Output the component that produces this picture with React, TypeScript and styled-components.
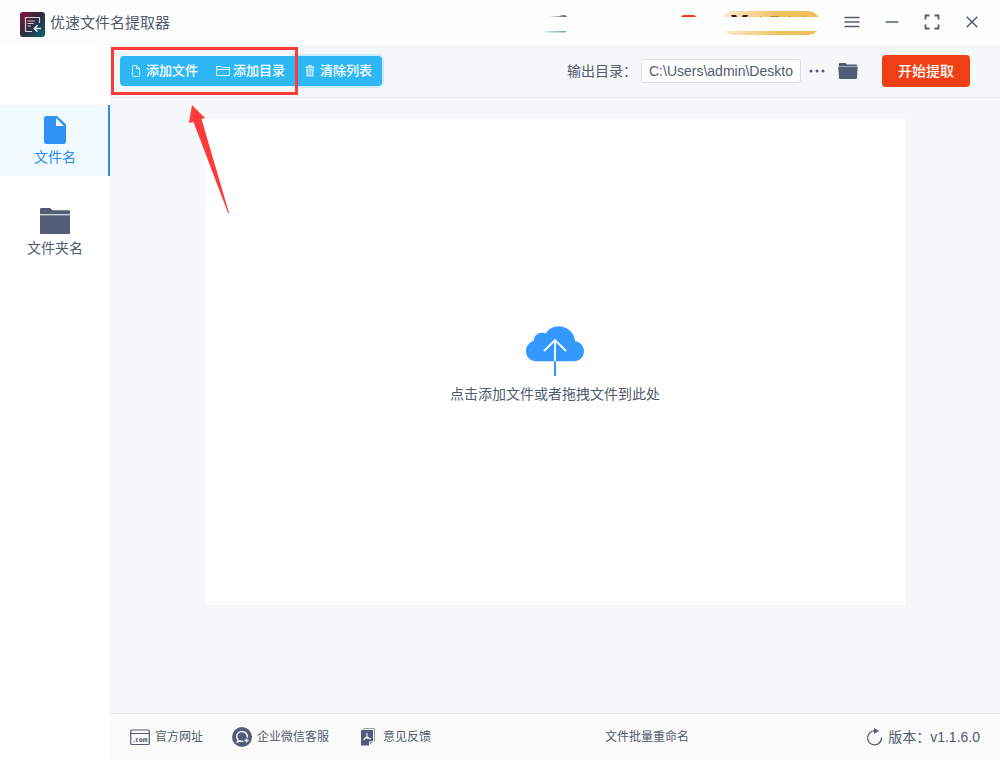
import React from "react";
import styled, { createGlobalStyle } from "styled-components";

const ink = "#515a6e";
const iconInk = "#525c76";
const blue = "#2d8cf0";
const red = "#ff3a3a";

const GlobalStyle = createGlobalStyle`
  *, *::before, *::after { box-sizing: border-box; }
  body {
    margin: 0;
    background: #f5f7f9;
    color: ${ink};
    font: 14px/20px "Liberation Sans", "Noto Sans CJK SC", sans-serif;
  }
  button, input { font: inherit; color: inherit; margin: 0; }
  button { border: 0; padding: 0; background: none; cursor: pointer; }
  a { color: inherit; text-decoration: none; }
  svg { display: block; flex: none; }
`;

const Window = styled.div`
  position: relative;
  display: flex;
  flex-direction: column;
  min-height: 100vh;
`;

const TitleBar = styled.header`
  display: flex;
  align-items: center;
  height: 45px;
  padding: 0 8px 0 20px;
  background: #fdfdfd;
`;

const Brand = styled.div`
  display: flex;
  align-items: center;
  gap: 5px;
  padding-top: 4px;
`;

const AppName = styled.h1`
  margin: 0 0 4px;
  font-size: 15px;
  font-weight: 400;
  line-height: 20px;
`;

const Account = styled.div`
  position: relative;
  display: flex;
  align-items: center;
  height: 24px;
  margin: 0 12px 0 auto;
`;

const AccountMask = styled.div`
  position: absolute;
  left: 0;
  right: 0;
  top: 6px;
  height: 14px;
  background: #fefefe;
`;

const Avatar = styled.div`
  margin-right: 114px;
`;

const HotBadge = styled.div`
  width: 15px;
  height: 16px;
  margin-right: 26px;
  border-radius: 3px;
  background: #f03e12;
`;

const VipPill = styled.div`
  width: 98px;
  height: 24px;
  border-radius: 12px;
  background: linear-gradient(90deg, #fbebcf, #f0c060 60%, #efbe5c);
`;

const WindowControls = styled.div`
  display: flex;
  height: 45px;
`;

const WindowButton = styled.button`
  display: grid;
  place-items: center;
  width: 40px;
  height: 43px;
`;

const Body = styled.div`
  display: flex;
  flex: 1;
`;

const Sidebar = styled.nav`
  display: flex;
  flex-direction: column;
  gap: 20px;
  flex: none;
  width: 110px;
  padding-top: 60px;
  background: #fff;
`;

const SideItem = styled.button<{ $active?: boolean }>`
  display: flex;
  flex-direction: column;
  align-items: center;
  gap: 3px;
  height: 71px;
  padding-top: 11px;
  color: ${(p) => (p.$active ? blue : ink)};
  background: ${(p) => (p.$active ? "#f0faff" : "transparent")};
  box-shadow: ${(p) => (p.$active ? `inset -2px 0 ${blue}` : "none")};
`;

const Main = styled.main`
  display: flex;
  flex: 1;
  flex-direction: column;
  min-width: 0;
`;

const Toolbar = styled.div`
  display: flex;
  align-items: center;
  height: 53px;
  padding: 0 30px 0 10px;
  border-bottom: 1px solid #e8eaec;
`;

const ButtonGroup = styled.div`
  display: flex;
`;

const ActionButton = styled.button<{ $focused?: boolean }>`
  display: flex;
  align-items: center;
  gap: 3px;
  height: 30px;
  padding: 0 9px;
  color: #fff;
  background: #2db7f5;
  font-size: 13px;
  font-weight: 500;
  white-space: nowrap;
  box-shadow: ${(p) => (p.$focused ? "0 0 0 2px rgba(45, 183, 245, 0.2)" : "none")};
  &:first-child { border-radius: 4px 0 0 4px; }
  &:last-child { border-radius: 0 4px 4px 0; padding-right: 10px; }
`;

const OutputField = styled.div`
  display: flex;
  align-items: center;
  margin-left: auto;
`;

const OutputLabel = styled.label`
  margin-right: 4px;
  white-space: nowrap;
`;

const PathInput = styled.input`
  width: 160px;
  height: 24px;
  padding: 0 7px;
  border: 1px solid #dcdee2;
  border-radius: 3px;
  background: #fff;
  outline: none;
`;

const IconButton = styled.button`
  display: grid;
  place-items: center;
  width: 31px;
  height: 24px;
`;

const StartButton = styled.button`
  width: 88px;
  height: 32px;
  margin-left: 19px;
  border-radius: 4px;
  background: #ef3f15;
  color: #fff;
  font-weight: 500;
`;

const Workspace = styled.section`
  display: flex;
  flex: 1;
  padding: 20px 95px 108px;
`;

const DropZone = styled.button`
  display: flex;
  flex: 1;
  flex-direction: column;
  align-items: center;
  justify-content: center;
  gap: 8px;
  padding-top: 7px;
  background: #fff;
`;

const Footer = styled.footer`
  display: flex;
  align-items: center;
  gap: 29px;
  height: 47px;
  padding: 0 20px;
  border-top: 1px solid #e8eaec;
  background: #fafafa;
  font-size: 12px;
  white-space: nowrap;
`;

const FooterLink = styled.a`
  display: flex;
  align-items: center;
  gap: 5px;
`;

const RenameLink = styled.a`
  margin-left: 145px;
`;

const Version = styled.div`
  display: flex;
  align-items: center;
  gap: 5px;
  margin-left: auto;
  font-size: 14px;
`;

const Highlight = styled.div`
  position: absolute;
  left: 111px;
  top: 47px;
  width: 187px;
  height: 48px;
  border: 3px solid ${red};
  pointer-events: none;
`;

const Arrow = styled.svg`
  position: absolute;
  left: 188px;
  top: 104px;
  pointer-events: none;
`;

const LogoIcon = () => (
  <svg width="25" height="25" viewBox="0 0 25 25" fill="none">
    <defs>
      <linearGradient id="logo" x1="0" y1="0" x2="1" y2="1">
        <stop offset="0" stopColor="#8a0f35" />
        <stop offset="0.45" stopColor="#33283f" />
        <stop offset="1" stopColor="#08636f" />
      </linearGradient>
    </defs>
    <rect width="25" height="25" rx="3" fill="url(#logo)" />
    <path d="M12 19.500H5.500V5.500H19.500V11" stroke="#d8ced8" strokeWidth="1.200" />
    <path d="M7.500 9H15M7.500 11.500H13.500M7.500 14H11" stroke="#d8ced8" strokeWidth="1.200" />
    <path d="M21 16.500H14.500M17.500 13.300L14.300 16.500L17.500 19.700" stroke="#e8f0f2" strokeWidth="1.500" />
  </svg>
);

const AvatarTrace = () => (
  <svg width="22" height="24" viewBox="0 0 22 24">
    <defs>
      <linearGradient id="av" x1="0" x2="1">
        <stop offset="0" stopColor="#fff" />
        <stop offset="1" stopColor="#42586a" />
      </linearGradient>
      <linearGradient id="av2" x1="0" x2="1">
        <stop offset="0" stopColor="#d5e8ea" />
        <stop offset="1" stopColor="#6e9a9f" />
      </linearGradient>
    </defs>
    <path d="M4 6V5H14Q17 3.600 20 4L22 6Z" fill="url(#av)" />
    <path d="M0 20H22L20 21.500H0Z" fill="url(#av2)" />
  </svg>
);

const VipTrace = () => (
  <svg width="98" height="24" viewBox="0 0 98 24">
    <path d="M9 4H14L15 6H10ZM21 4H26L25 6H20Z" fill="#4c1010" />
    <path d="M38 5H39V6H38ZM48 5H57V6H48ZM67 5H68V6H67ZM81 5H82V6H81Z" fill="#b98a45" />
  </svg>
);

const FileOutline = () => (
  <svg width="14" height="14" viewBox="0 0 14 14" fill="none" stroke="#fff" strokeOpacity="0.85">
    <path d="M3.500 2.500Q3.500 1.500 4.500 1.500H7.500L10.500 4.500V11.500Q10.500 12.500 9.500 12.500H4.500Q3.500 12.500 3.500 11.500ZM7.500 1.500V4.500H10.500" />
  </svg>
);

const FolderOutline = () => (
  <svg width="14" height="14" viewBox="0 0 14 14" fill="none" stroke="#fff" strokeOpacity="0.85">
    <path d="M0.500 11.500V2.500H5L6 3.500H13.500V11.500ZM0.500 5.500H13.500" />
  </svg>
);

const TrashIcon = () => (
  <svg width="14" height="14" viewBox="0 0 14 14" fill="#fff" fillOpacity="0.65">
    <path d="M5 1H9V2.200H11.500V4H2.500V2.200H5Z" />
    <path fillRule="evenodd" d="M3 4.500H11L10.500 12.500H3.500ZM5 6V11H5.500V6ZM6.800 6V11H7.300V6ZM8.500 6V11H9V6Z" />
  </svg>
);

const FileIcon = () => (
  <svg width="22" height="28" viewBox="0 0 22 28">
    <path d="M2.500 0H13L22 8.500V25.500Q22 28 19.500 28H2.500Q0 28 0 25.500V2.500Q0 0 2.500 0Z" fill="#3192f5" />
    <path d="M12 2L20 10H12Z" fill="#f0faff" />
  </svg>
);

const SideFolder = () => (
  <svg width="30" height="28" viewBox="0 0 30 28" fill={iconInk}>
    <path d="M0 2Q0 1 1 1H10L12.500 3.300H29Q30 3.300 30 4.300V7.300H0Z" />
    <path d="M0 8.300H30V26Q30 27 29 27H1Q0 27 0 26Z" />
  </svg>
);

const FolderSolid = () => (
  <svg width="20" height="18" viewBox="0 0 20 18" fill={iconInk}>
    <path d="M1 4V2Q1 1 2 1H7.500L9 2.500H18Q19 2.500 19 3.500V4Z" />
    <path d="M0.300 4.600H19.700L19 16Q19 17 18 17H2Q1 17 1 16Z" />
  </svg>
);

const CloudIcon = () => (
  <svg width="58" height="50" viewBox="0 0 58 50" fill="none">
    <path
      d="M10 35.300C4.500 35.300 0 31 0 25C0 20 3.500 16 7.800 14.800C8 10 11.500 6.800 16 6.800Q18 6.800 19.800 7.500C22.500 3.200 27 0.300 32.500 0.300C41.500 0.300 48.500 7 49 15C54 16 58 20 58 25C58 31 53.500 35.300 48 35.300Z"
      fill="#3398ff"
    />
    <path d="M29 35V50" stroke="#3398ff" strokeWidth="2" />
    <path d="M29 35.300V14.500M18 25L29 14L40 25" stroke="#fff" strokeWidth="1.900" />
  </svg>
);

const SiteIcon = () => (
  <svg width="20" height="17" viewBox="0 0 20 17" fill="none" stroke={iconInk}>
    <rect x="0.700" y="1" width="18.600" height="14.500" rx="1" strokeWidth="1.200" />
    <path d="M1 4.500H19" />
    <path d="M3.700 12.500H4.700M8 9.800H6.300V12.400H8M9.800 9.800H11.800V12.400H9.800ZM13.400 13V9.800H16.800V13M15.100 9.800V13" />
  </svg>
);

const ChatIcon = () => (
  <svg width="20" height="20" viewBox="0 0 20 20" fill="none">
    <circle cx="10" cy="10" r="10" fill={iconInk} />
    <path
      d="M11.500 14.200Q9.500 14.700 7.700 14L5.500 15L6 12.800A5.300 5 0 1 1 15.200 10.500"
      stroke="#fafafa"
      strokeWidth="1.400"
    />
    <path d="M14.600 11.500V15.500M12.600 13.500H16.600" stroke="#fafafa" strokeWidth="1.300" />
  </svg>
);

const FeedbackIcon = () => (
  <svg width="20" height="18" viewBox="0 0 20 18" fill="none">
    <path d="M5 1.500L6 0.600H16.500V13.500" stroke={iconInk} strokeOpacity="0.6" />
    <path d="M3 2H15V13.500L11 17.500H3Z" fill={iconInk} />
    <path d="M11.500 17V13.800H15" stroke="#fafafa" />
    <path d="M9 5V8.500L5.500 11.800M9 8.500Q10 10.300 13 11M6.500 10.500Q9 9.300 11.500 10.500" stroke="#fafafa" strokeWidth="1.100" />
  </svg>
);

const RefreshIcon = () => (
  <svg width="17" height="18" viewBox="0 0 17 18" fill="none">
    <path d="M9.500 3A7 7 0 1 0 15.500 9.500" stroke={iconInk} strokeWidth="1.300" />
    <path d="M8 0L13 3L8 6Z" fill={iconInk} />
  </svg>
);

export default function App() {
  return (
    <>
      <GlobalStyle />
      <Window>
        <TitleBar>
          <Brand>
            <LogoIcon />
            <AppName>优速文件名提取器</AppName>
          </Brand>
          <Account>
            <Avatar><AvatarTrace /></Avatar>
            <HotBadge />
            <VipPill><VipTrace /></VipPill>
            <AccountMask />
          </Account>
          <WindowControls>
            <WindowButton aria-label="菜单">
              <svg width="16" height="12" viewBox="0 0 16 12" stroke={iconInk} strokeWidth="1.500">
                <path d="M0.500 1.500H15.500M0.500 6H15.500M0.500 10.500H15.500" />
              </svg>
            </WindowButton>
            <WindowButton aria-label="最小化">
              <svg width="14" height="2" viewBox="0 0 14 2" stroke={iconInk} strokeWidth="1.500">
                <path d="M0.500 1H13.500" />
              </svg>
            </WindowButton>
            <WindowButton aria-label="最大化">
              <svg width="16" height="16" viewBox="0 0 16 16" fill="none" stroke={iconInk} strokeWidth="1.800">
                <path d="M1.500 5.500V1.500H5.500M10.500 1.500H14.500V5.500M14.500 10.500V14.500H10.500M5.500 14.500H1.500V10.500" />
              </svg>
            </WindowButton>
            <WindowButton aria-label="关闭">
              <svg width="12" height="12" viewBox="0 0 12 12" stroke={iconInk} strokeWidth="1.500">
                <path d="M0.700 0.700L11.300 11.300M11.300 0.700L0.700 11.300" />
              </svg>
            </WindowButton>
          </WindowControls>
        </TitleBar>

        <Body>
          <Sidebar>
            <SideItem $active><FileIcon />文件名</SideItem>
            <SideItem><SideFolder />文件夹名</SideItem>
          </Sidebar>

          <Main>
            <Toolbar>
              <ButtonGroup>
                <ActionButton><FileOutline />添加文件</ActionButton>
                <ActionButton><FolderOutline />添加目录</ActionButton>
                <ActionButton $focused><TrashIcon />清除列表</ActionButton>
              </ButtonGroup>
              <OutputField>
                <OutputLabel htmlFor="output-path">输出目录：</OutputLabel>
                <PathInput id="output-path" type="text" defaultValue="C:\Users\admin\Deskto" />
                <IconButton aria-label="更多">
                  <svg width="16" height="4" viewBox="0 0 16 4" fill={iconInk}>
                    <circle cx="2" cy="2" r="1.500" />
                    <circle cx="8" cy="2" r="1.500" />
                    <circle cx="14" cy="2" r="1.500" />
                  </svg>
                </IconButton>
                <IconButton aria-label="打开目录"><FolderSolid /></IconButton>
              </OutputField>
              <StartButton>开始提取</StartButton>
            </Toolbar>

            <Workspace>
              <DropZone>
                <CloudIcon />
                <span>点击添加文件或者拖拽文件到此处</span>
              </DropZone>
            </Workspace>

            <Footer>
              <FooterLink href="#site"><SiteIcon />官方网址</FooterLink>
              <FooterLink href="#service"><ChatIcon />企业微信客服</FooterLink>
              <FooterLink href="#feedback"><FeedbackIcon />意见反馈</FooterLink>
              <RenameLink href="#rename">文件批量重命名</RenameLink>
              <Version><RefreshIcon />版本：v1.1.6.0</Version>
            </Footer>
          </Main>
        </Body>

        <Highlight />
        <Arrow width="42" height="110" viewBox="0 0 42 110">
          <path d="M4 1L17 14L13.500 15L41 109H40L5.500 18L1 19Z" fill={red} />
        </Arrow>
      </Window>
    </>
  );
}
